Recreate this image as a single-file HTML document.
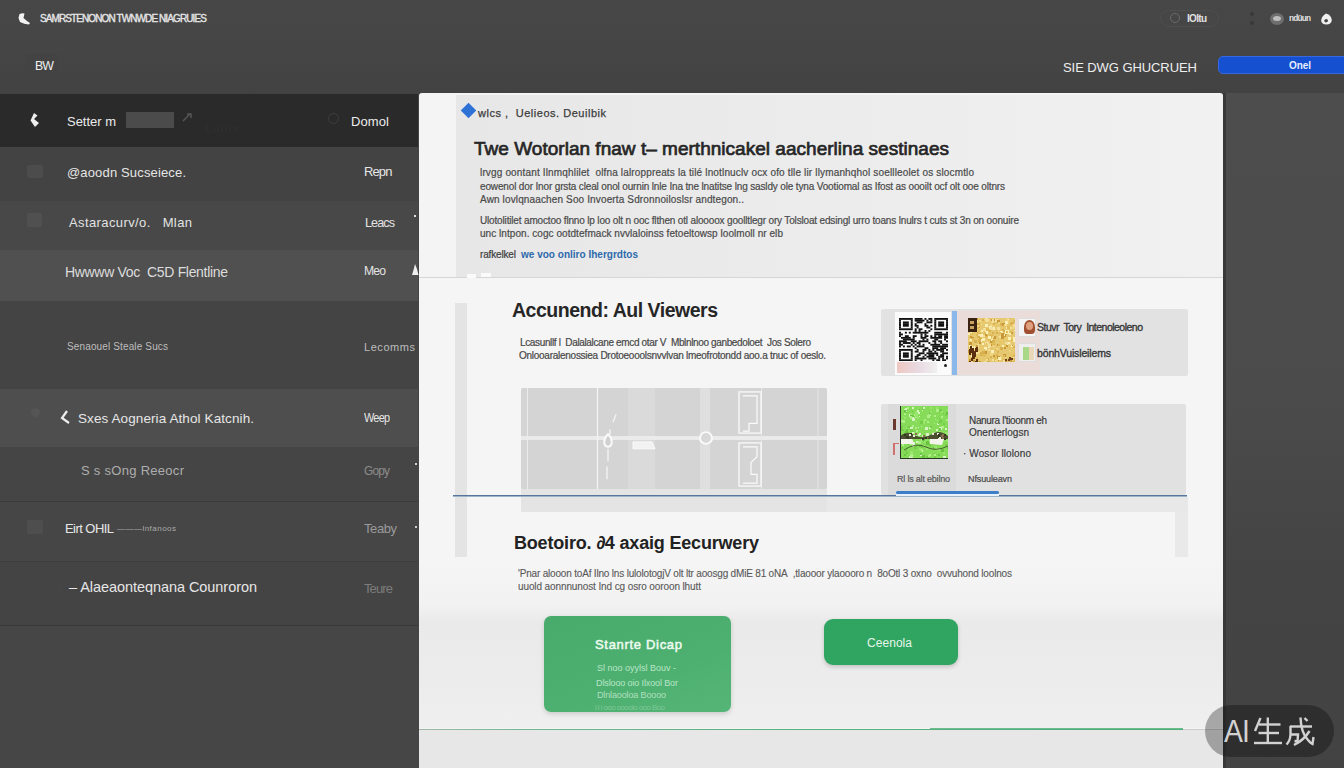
<!DOCTYPE html>
<html><head><meta charset="utf-8">
<style>
*{margin:0;padding:0;box-sizing:border-box}
html,body{width:1344px;height:768px;overflow:hidden}
body{background:#454545;font-family:"Liberation Sans",sans-serif;position:relative}
.a{position:absolute;white-space:nowrap}
</style></head><body>

<div class="a" style="left:0;top:0;width:1344px;height:94px;background:linear-gradient(180deg,#474747,#454545 60%,#424242)"></div>
<svg class="a" style="left:17px;top:12px" width="14" height="14" viewBox="0 0 14 14"><path d="M2.5 2 Q5 1 7.5 1.5 L6.5 6 Q9 8.5 13 11 L12 12.5 Q7 12 3 10 L1.5 6 Z" fill="#f2f2f2"/></svg>
<div class="a" style="left:25px;top:54px;width:33px;height:22px;background:#434343;border-radius:3px"></div>
<div class="a" style="left:1160px;top:10px;width:59px;height:17px;border:1px solid #4e4e4e;border-radius:9px"></div>
<div class="a" style="left:1170px;top:13px;width:10px;height:10px;border:1.5px solid #6a6a6a;border-radius:50%"></div>
<div class="a" style="left:1250px;top:12px;width:4px;height:4px;background:#383838;border-radius:2px"></div>
<div class="a" style="left:1250px;top:21px;width:4px;height:4px;background:#383838;border-radius:2px"></div>
<div class="a" style="left:1270px;top:13px;width:14px;height:12px;background:#6e6e6e;border-radius:50%"></div>
<div class="a" style="left:1273px;top:16px;width:8px;height:5px;background:#bdbdbd;border-radius:50%"></div>
<svg class="a" style="left:1320px;top:12px" width="13" height="14" viewBox="0 0 13 14"><path d="M6 1.5 Q11.5 3 11.8 8.5 Q11 12.5 6.5 12.5 Q1.5 12.5 1.2 8.5 Q1.5 4 6 1.5 Z" fill="#f0f0f0"/><path d="M4 9 Q5.5 5.5 8 8 Q8 10.5 5.5 10.5 Z" fill="#454545"/></svg>
<div class="a" style="left:1218px;top:56px;width:130px;height:18px;background:#1450cf;border-radius:5px;border:1px solid #3768e0"></div>
<div class="a" style="left:0;top:94px;width:418px;height:53px;background:#2a2a2a"></div>
<div class="a" style="left:0;top:147px;width:418px;height:54px;background:#434343"></div>
<div class="a" style="left:0;top:201px;width:418px;height:49px;background:#484848"></div>
<div class="a" style="left:0;top:250px;width:418px;height:51px;background:#505050"></div>
<div class="a" style="left:0;top:301px;width:418px;height:88px;background:#444444"></div>
<div class="a" style="left:0;top:389px;width:418px;height:58px;background:#4e4e4e"></div>
<div class="a" style="left:0;top:447px;width:418px;height:54px;background:#454545"></div>
<div class="a" style="left:0;top:501px;width:418px;height:60px;background:#464646;border-top:1px solid #3b3b3b"></div>
<div class="a" style="left:0;top:561px;width:418px;height:64px;background:#444444;border-top:1px solid #3d3d3d"></div>
<div class="a" style="left:0;top:625px;width:418px;height:143px;background:#464646;border-top:1px solid #393939"></div>
<svg class="a" style="left:29px;top:112px" width="11" height="16" viewBox="0 0 11 16"><path d="M5 1 L8.5 3.5 L5 7 L10 11 L6 15 L1.5 8.5 Z" fill="#eeeeee"/></svg>
<div class="a" style="left:126px;top:112px;width:48px;height:16px;background:#4b4b4b;border-radius:1px"></div>
<svg class="a" style="left:181px;top:112px" width="12" height="11" viewBox="0 0 12 11"><path d="M2 9 L9 2 M6 2 L10 2 L10 6" stroke="#555" stroke-width="1.5" fill="none"/></svg>
<div class="a" style="left:328px;top:113px;width:11px;height:11px;border:1.5px solid #3e3e3e;border-radius:50%"></div>
<div class="a" style="left:27px;top:165px;width:16px;height:13px;background:#4c4c4c;border-radius:2px"></div>
<div class="a" style="left:27px;top:213px;width:15px;height:14px;background:#505050;border-radius:2px"></div>
<div class="a" style="left:414px;top:215px;width:2px;height:2px;background:#ddd"></div>
<svg class="a" style="left:411px;top:263px" width="8" height="14" viewBox="0 0 8 14"><path d="M4 1 L6 6 L7.5 12 L1 12 L2.5 7 Z" fill="#eee"/></svg>
<div class="a" style="left:31px;top:408px;width:9px;height:9px;background:#555;border-radius:50%"></div>
<svg class="a" style="left:60px;top:410px" width="12" height="15" viewBox="0 0 12 15"><path d="M7 1 L2 8 L9 13" stroke="#eee" stroke-width="2.2" fill="none"/></svg>
<div class="a" style="left:415px;top:463px;width:2px;height:2px;background:#ccc"></div>
<div class="a" style="left:27px;top:520px;width:16px;height:14px;background:#4e4e4e;border-radius:2px"></div>
<div class="a" style="left:415px;top:526px;width:2px;height:2px;background:#ccc"></div>
<div class="a" style="left:1223px;top:93px;width:121px;height:675px;background:linear-gradient(180deg,#4d4d4d,#4b4b4b 45%,#444444 70%,#434343)"></div>
<div class="a" style="left:1223px;top:93px;width:3px;height:675px;background:#383838"></div>
<div class="a" style="left:419px;top:93px;width:804px;height:675px;background:#f4f4f4;border-radius:3px 3px 0 0"></div>
<div class="a" style="left:456px;top:95px;width:767px;height:183px;background:linear-gradient(90deg,#e7e7e7,#ececec 50%,#f1f1f1)"></div>
<div class="a" style="left:419px;top:277px;width:804px;height:1px;background:#d6d6d6"></div>
<div class="a" style="left:419px;top:278px;width:804px;height:340px;background:#f5f5f5"></div>
<div class="a" style="left:419px;top:560px;width:804px;height:168px;background:linear-gradient(180deg,#f5f5f5 0px,#f2f2f2 45px,#eaeaea 62px,#ececec 120px,#efefef 168px)"></div>
<div class="a" style="left:419px;top:729px;width:764px;height:1px;background:linear-gradient(90deg,#a0b8a8,#70b890 15%,#58b080 50%,#4fae7a)"></div>
<div class="a" style="left:930px;top:728px;width:253px;height:1px;background:#6cbc8c"></div>
<div class="a" style="left:1183px;top:729px;width:40px;height:1px;background:#cccccc"></div>
<div class="a" style="left:419px;top:730px;width:804px;height:38px;background:#e7e7e7"></div>
<div class="a" style="left:467px;top:274px;width:9px;height:4px;background:#fafafa"></div>
<div class="a" style="left:481px;top:273px;width:10px;height:4px;background:#fafafa"></div>
<div class="a" style="left:463px;top:104.5px;width:11px;height:11px;background:#2f72d6;transform:rotate(45deg)"></div>
<div class="a" style="left:455px;top:303px;width:12px;height:254px;background:#e4e4e4"></div>
<div class="a" style="left:521px;top:497px;width:667px;height:15px;background:#e8e8e8"></div>
<div class="a" style="left:1175px;top:512px;width:13px;height:45px;background:#e9e9e9"></div>
<div class="a" style="left:521px;top:388px;width:306px;height:124px;background:#e4e4e4;border-radius:3px"></div>
<svg class="a" style="left:521px;top:388px" width="306" height="101" viewBox="0 0 306 103" preserveAspectRatio="none">
<rect x="0" y="0" width="306" height="103" rx="2" fill="#d4d4d4"/>
<rect x="107" y="0" width="27" height="103" fill="#dadada"/>
<rect x="179" y="0" width="10" height="103" fill="#dfdfdf"/>
<rect x="0" y="49" width="306" height="4" fill="#ebebeb"/>
<line x1="6.5" y1="0" x2="6.5" y2="103" stroke="#ebebeb" stroke-width="1"/>
<line x1="76.5" y1="0" x2="76.5" y2="103" stroke="#f4f4f4" stroke-width="1.2"/>
<line x1="297" y1="0" x2="297" y2="103" stroke="#e6e6e6" stroke-width="1"/>
<line x1="240.5" y1="0" x2="240.5" y2="103" stroke="#e6e6e6" stroke-width="1"/>
<path d="M95 27 L92 35 M89 42 L89 48 M87 62 L87 75 M86 80 L86 93" stroke="#f4f4f4" stroke-width="1.3" fill="none"/>
<path d="M87 47 C82 52 82 59 87 60 C92 59 92 52 87 47 Z" stroke="#fafafa" stroke-width="2" fill="#d0d0d0"/>
<path d="M112 55 L131 55 L134 62 L112 62 Z" fill="#f2f2f2" stroke="#fafafa" stroke-width="1"/>
<circle cx="185" cy="51" r="6" fill="#d8d8d8" stroke="#fafafa" stroke-width="2"/>
<rect x="218" y="4" width="22" height="42" fill="none" stroke="#fafafa" stroke-width="1.3"/>
<path d="M222 8 L236 8 L236 36 L228 36 L228 44 L222 44" fill="none" stroke="#fafafa" stroke-width="1.2"/>
<rect x="218" y="56" width="22" height="44" fill="none" stroke="#fafafa" stroke-width="1.3"/>
<path d="M222 60 L236 60 L236 70 L230 76 L230 88 L236 88 L236 97 L222 97" fill="none" stroke="#fafafa" stroke-width="1.2"/>
</svg>
<div class="a" style="left:453px;top:495px;width:734px;height:1px;background:#56769c"></div>
<div class="a" style="left:453px;top:496px;width:734px;height:1px;background:#9fb2c8"></div>
<div class="a" style="left:881px;top:309px;width:307px;height:67px;background:#e2e2e2;border-radius:2px"></div>
<div class="a" style="left:895px;top:312px;width:56px;height:63px;background:#fbfbfb"></div>
<div class="a" style="left:952px;top:311px;width:5px;height:64px;background:#8ab8ea"></div>
<div class="a" style="left:957px;top:311px;width:83px;height:64px;background:#eadcd8"></div>
<svg class="a" style="left:899px;top:318px" width="49" height="43" viewBox="0 0 25 25" preserveAspectRatio="none"><g fill="#121212"><rect x="0" y="0" width="7" height="1.08"/><rect x="8" y="0" width="4" height="1.08"/><rect x="13" y="0" width="1" height="1.08"/><rect x="15" y="0" width="2" height="1.08"/><rect x="18" y="0" width="7" height="1.08"/><rect x="0" y="1" width="1" height="1.08"/><rect x="6" y="1" width="1" height="1.08"/><rect x="8" y="1" width="5" height="1.08"/><rect x="14" y="1" width="1" height="1.08"/><rect x="16" y="1" width="1" height="1.08"/><rect x="18" y="1" width="1" height="1.08"/><rect x="24" y="1" width="1" height="1.08"/><rect x="0" y="2" width="1" height="1.08"/><rect x="2" y="2" width="3" height="1.08"/><rect x="6" y="2" width="1" height="1.08"/><rect x="9" y="2" width="3" height="1.08"/><rect x="14" y="2" width="3" height="1.08"/><rect x="18" y="2" width="1" height="1.08"/><rect x="20" y="2" width="3" height="1.08"/><rect x="24" y="2" width="1" height="1.08"/><rect x="0" y="3" width="1" height="1.08"/><rect x="2" y="3" width="3" height="1.08"/><rect x="6" y="3" width="1" height="1.08"/><rect x="8" y="3" width="1" height="1.08"/><rect x="13" y="3" width="1" height="1.08"/><rect x="18" y="3" width="1" height="1.08"/><rect x="20" y="3" width="3" height="1.08"/><rect x="24" y="3" width="1" height="1.08"/><rect x="0" y="4" width="1" height="1.08"/><rect x="2" y="4" width="3" height="1.08"/><rect x="6" y="4" width="1" height="1.08"/><rect x="8" y="4" width="2" height="1.08"/><rect x="13" y="4" width="2" height="1.08"/><rect x="16" y="4" width="1" height="1.08"/><rect x="18" y="4" width="1" height="1.08"/><rect x="20" y="4" width="3" height="1.08"/><rect x="24" y="4" width="1" height="1.08"/><rect x="0" y="5" width="1" height="1.08"/><rect x="6" y="5" width="1" height="1.08"/><rect x="9" y="5" width="1" height="1.08"/><rect x="14" y="5" width="2" height="1.08"/><rect x="18" y="5" width="1" height="1.08"/><rect x="24" y="5" width="1" height="1.08"/><rect x="0" y="6" width="7" height="1.08"/><rect x="8" y="6" width="1" height="1.08"/><rect x="10" y="6" width="2" height="1.08"/><rect x="16" y="6" width="1" height="1.08"/><rect x="18" y="6" width="7" height="1.08"/><rect x="8" y="7" width="1" height="1.08"/><rect x="10" y="7" width="1" height="1.08"/><rect x="13" y="7" width="1" height="1.08"/><rect x="15" y="7" width="1" height="1.08"/><rect x="0" y="8" width="1" height="1.08"/><rect x="3" y="8" width="1" height="1.08"/><rect x="5" y="8" width="1" height="1.08"/><rect x="7" y="8" width="8" height="1.08"/><rect x="18" y="8" width="4" height="1.08"/><rect x="24" y="8" width="1" height="1.08"/><rect x="0" y="9" width="2" height="1.08"/><rect x="11" y="9" width="1" height="1.08"/><rect x="13" y="9" width="1" height="1.08"/><rect x="18" y="9" width="7" height="1.08"/><rect x="0" y="10" width="1" height="1.08"/><rect x="3" y="10" width="2" height="1.08"/><rect x="7" y="10" width="2" height="1.08"/><rect x="11" y="10" width="1" height="1.08"/><rect x="13" y="10" width="2" height="1.08"/><rect x="16" y="10" width="1" height="1.08"/><rect x="18" y="10" width="1" height="1.08"/><rect x="20" y="10" width="2" height="1.08"/><rect x="23" y="10" width="2" height="1.08"/><rect x="1" y="11" width="5" height="1.08"/><rect x="7" y="11" width="1" height="1.08"/><rect x="11" y="11" width="3" height="1.08"/><rect x="16" y="11" width="6" height="1.08"/><rect x="23" y="11" width="2" height="1.08"/><rect x="2" y="12" width="6" height="1.08"/><rect x="12" y="12" width="1" height="1.08"/><rect x="14" y="12" width="1" height="1.08"/><rect x="18" y="12" width="2" height="1.08"/><rect x="23" y="12" width="1" height="1.08"/><rect x="0" y="13" width="4" height="1.08"/><rect x="6" y="13" width="3" height="1.08"/><rect x="10" y="13" width="5" height="1.08"/><rect x="17" y="13" width="2" height="1.08"/><rect x="20" y="13" width="2" height="1.08"/><rect x="24" y="13" width="1" height="1.08"/><rect x="0" y="14" width="1" height="1.08"/><rect x="2" y="14" width="4" height="1.08"/><rect x="7" y="14" width="1" height="1.08"/><rect x="9" y="14" width="2" height="1.08"/><rect x="15" y="14" width="1" height="1.08"/><rect x="18" y="14" width="1" height="1.08"/><rect x="21" y="14" width="1" height="1.08"/><rect x="0" y="15" width="2" height="1.08"/><rect x="6" y="15" width="1" height="1.08"/><rect x="8" y="15" width="1" height="1.08"/><rect x="10" y="15" width="1" height="1.08"/><rect x="12" y="15" width="1" height="1.08"/><rect x="16" y="15" width="5" height="1.08"/><rect x="22" y="15" width="3" height="1.08"/><rect x="0" y="16" width="1" height="1.08"/><rect x="2" y="16" width="1" height="1.08"/><rect x="4" y="16" width="2" height="1.08"/><rect x="7" y="16" width="1" height="1.08"/><rect x="9" y="16" width="4" height="1.08"/><rect x="17" y="16" width="8" height="1.08"/><rect x="8" y="17" width="1" height="1.08"/><rect x="13" y="17" width="2" height="1.08"/><rect x="17" y="17" width="3" height="1.08"/><rect x="21" y="17" width="3" height="1.08"/><rect x="0" y="18" width="7" height="1.08"/><rect x="9" y="18" width="1" height="1.08"/><rect x="12" y="18" width="2" height="1.08"/><rect x="15" y="18" width="1" height="1.08"/><rect x="17" y="18" width="1" height="1.08"/><rect x="19" y="18" width="4" height="1.08"/><rect x="24" y="18" width="1" height="1.08"/><rect x="0" y="19" width="1" height="1.08"/><rect x="6" y="19" width="1" height="1.08"/><rect x="8" y="19" width="2" height="1.08"/><rect x="12" y="19" width="1" height="1.08"/><rect x="15" y="19" width="2" height="1.08"/><rect x="18" y="19" width="1" height="1.08"/><rect x="21" y="19" width="2" height="1.08"/><rect x="0" y="20" width="1" height="1.08"/><rect x="2" y="20" width="3" height="1.08"/><rect x="6" y="20" width="1" height="1.08"/><rect x="10" y="20" width="3" height="1.08"/><rect x="14" y="20" width="6" height="1.08"/><rect x="22" y="20" width="3" height="1.08"/><rect x="0" y="21" width="1" height="1.08"/><rect x="2" y="21" width="3" height="1.08"/><rect x="6" y="21" width="1" height="1.08"/><rect x="9" y="21" width="2" height="1.08"/><rect x="13" y="21" width="1" height="1.08"/><rect x="15" y="21" width="3" height="1.08"/><rect x="19" y="21" width="1" height="1.08"/><rect x="21" y="21" width="2" height="1.08"/><rect x="0" y="22" width="1" height="1.08"/><rect x="2" y="22" width="3" height="1.08"/><rect x="6" y="22" width="1" height="1.08"/><rect x="8" y="22" width="2" height="1.08"/><rect x="12" y="22" width="1" height="1.08"/><rect x="14" y="22" width="4" height="1.08"/><rect x="20" y="22" width="3" height="1.08"/><rect x="24" y="22" width="1" height="1.08"/><rect x="0" y="23" width="1" height="1.08"/><rect x="6" y="23" width="1" height="1.08"/><rect x="8" y="23" width="6" height="1.08"/><rect x="15" y="23" width="4" height="1.08"/><rect x="20" y="23" width="1" height="1.08"/><rect x="22" y="23" width="1" height="1.08"/><rect x="24" y="23" width="1" height="1.08"/><rect x="0" y="24" width="7" height="1.08"/><rect x="8" y="24" width="1" height="1.08"/><rect x="11" y="24" width="1" height="1.08"/><rect x="17" y="24" width="1" height="1.08"/><rect x="19" y="24" width="2" height="1.08"/><rect x="22" y="24" width="2" height="1.08"/></g></svg>
<div class="a" style="left:897px;top:362px;width:40px;height:11px;background:linear-gradient(90deg,#efc8c0,#e8d8e0 50%,#f0f0f0)"></div>
<div class="a" style="left:944px;top:364px;width:3px;height:3px;background:#222;border-radius:2px"></div>
<svg class="a" style="left:968px;top:318px" width="47" height="44" viewBox="0 0 47 44"><rect width="47" height="44" fill="#e6c870"/><rect x="11" y="24" width="2" height="2" fill="#c89838"/><rect x="22" y="26" width="2" height="2" fill="#e0bc58"/><rect x="22" y="24" width="2" height="2" fill="#f0d480"/><rect x="22" y="37" width="2" height="2" fill="#f0d480"/><rect x="40" y="10" width="1" height="1" fill="#c89838"/><rect x="18" y="1" width="3" height="3" fill="#f4e09a"/><rect x="36" y="26" width="2" height="2" fill="#e8c868"/><rect x="39" y="12" width="2" height="2" fill="#fbf0b8"/><rect x="34" y="41" width="2" height="2" fill="#e0bc58"/><rect x="27" y="42" width="1" height="1" fill="#d8b050"/><rect x="5" y="6" width="2" height="2" fill="#f0d480"/><rect x="20" y="28" width="2" height="2" fill="#c89838"/><rect x="39" y="25" width="2" height="2" fill="#fbf0b8"/><rect x="27" y="40" width="2" height="2" fill="#e8c868"/><rect x="40" y="44" width="2" height="2" fill="#f4e09a"/><rect x="33" y="14" width="2" height="2" fill="#c89838"/><rect x="27" y="31" width="2" height="2" fill="#e0bc58"/><rect x="46" y="12" width="1" height="1" fill="#fbf0b8"/><rect x="40" y="44" width="1" height="1" fill="#e0bc58"/><rect x="3" y="39" width="1" height="1" fill="#fbf0b8"/><rect x="36" y="38" width="1" height="1" fill="#c89838"/><rect x="36" y="17" width="2" height="2" fill="#c89838"/><rect x="41" y="43" width="2" height="2" fill="#e8c868"/><rect x="15" y="3" width="2" height="2" fill="#e8c868"/><rect x="45" y="43" width="2" height="2" fill="#d8b050"/><rect x="7" y="2" width="3" height="3" fill="#d8b050"/><rect x="17" y="6" width="3" height="3" fill="#fbf0b8"/><rect x="22" y="23" width="2" height="2" fill="#c89838"/><rect x="32" y="5" width="3" height="3" fill="#e0bc58"/><rect x="24" y="19" width="2" height="2" fill="#f4e09a"/><rect x="44" y="19" width="2" height="2" fill="#d8b050"/><rect x="26" y="1" width="2" height="2" fill="#c89838"/><rect x="15" y="17" width="2" height="2" fill="#f4e09a"/><rect x="3" y="28" width="2" height="2" fill="#f0d480"/><rect x="43" y="27" width="2" height="2" fill="#fbf0b8"/><rect x="1" y="3" width="2" height="2" fill="#d8b050"/><rect x="12" y="20" width="2" height="2" fill="#d8b050"/><rect x="8" y="8" width="3" height="3" fill="#e0bc58"/><rect x="28" y="13" width="2" height="2" fill="#e0bc58"/><rect x="38" y="43" width="2" height="2" fill="#f4e09a"/><rect x="15" y="10" width="3" height="3" fill="#f4e09a"/><rect x="15" y="30" width="2" height="2" fill="#e8c868"/><rect x="5" y="14" width="2" height="2" fill="#e0bc58"/><rect x="11" y="36" width="3" height="3" fill="#e8c868"/><rect x="16" y="29" width="3" height="3" fill="#fbf0b8"/><rect x="13" y="35" width="1" height="1" fill="#f4e09a"/><rect x="15" y="37" width="2" height="2" fill="#e0bc58"/><rect x="13" y="36" width="2" height="2" fill="#e0bc58"/><rect x="29" y="26" width="2" height="2" fill="#c89838"/><rect x="37" y="12" width="2" height="2" fill="#fbf0b8"/><rect x="14" y="25" width="1" height="1" fill="#fbf0b8"/><rect x="7" y="0" width="3" height="3" fill="#c89838"/><rect x="46" y="19" width="3" height="3" fill="#f0d480"/><rect x="10" y="33" width="3" height="3" fill="#f0d480"/><rect x="35" y="42" width="2" height="2" fill="#f4e09a"/><rect x="40" y="38" width="3" height="3" fill="#e8c868"/><rect x="38" y="2" width="3" height="3" fill="#f0d480"/><rect x="24" y="9" width="3" height="3" fill="#fbf0b8"/><rect x="27" y="1" width="3" height="3" fill="#f4e09a"/><rect x="24" y="11" width="1" height="1" fill="#c89838"/><rect x="19" y="41" width="2" height="2" fill="#d8b050"/><rect x="6" y="43" width="2" height="2" fill="#e0bc58"/><rect x="37" y="15" width="2" height="2" fill="#c89838"/><rect x="42" y="5" width="2" height="2" fill="#d8b050"/><rect x="43" y="35" width="3" height="3" fill="#e8c868"/><rect x="23" y="25" width="2" height="2" fill="#e0bc58"/><rect x="13" y="12" width="2" height="2" fill="#fbf0b8"/><rect x="2" y="14" width="3" height="3" fill="#e0bc58"/><rect x="3" y="6" width="1" height="1" fill="#e8c868"/><rect x="23" y="1" width="2" height="2" fill="#c89838"/><rect x="24" y="14" width="2" height="2" fill="#d8b050"/><rect x="18" y="17" width="2" height="2" fill="#d8b050"/><rect x="9" y="14" width="1" height="1" fill="#c89838"/><rect x="0" y="32" width="3" height="3" fill="#c89838"/><rect x="8" y="16" width="2" height="2" fill="#e0bc58"/><rect x="25" y="28" width="1" height="1" fill="#fbf0b8"/><rect x="2" y="28" width="3" height="3" fill="#d8b050"/><rect x="20" y="31" width="2" height="2" fill="#f4e09a"/><rect x="10" y="12" width="2" height="2" fill="#e0bc58"/><rect x="20" y="19" width="3" height="3" fill="#d8b050"/><rect x="18" y="40" width="3" height="3" fill="#d8b050"/><rect x="6" y="30" width="3" height="3" fill="#f0d480"/><rect x="31" y="39" width="3" height="3" fill="#f0d480"/><rect x="5" y="14" width="2" height="2" fill="#e0bc58"/><rect x="28" y="0" width="1" height="1" fill="#e0bc58"/><rect x="18" y="23" width="2" height="2" fill="#f0d480"/><rect x="41" y="8" width="1" height="1" fill="#e0bc58"/><rect x="40" y="1" width="1" height="1" fill="#fbf0b8"/><rect x="39" y="42" width="2" height="2" fill="#e0bc58"/><rect x="4" y="44" width="2" height="2" fill="#c89838"/><rect x="34" y="5" width="3" height="3" fill="#c89838"/><rect x="3" y="14" width="2" height="2" fill="#e0bc58"/><rect x="4" y="44" width="2" height="2" fill="#fbf0b8"/><rect x="29" y="33" width="2" height="2" fill="#d8b050"/><rect x="28" y="41" width="2" height="2" fill="#e8c868"/><rect x="18" y="10" width="3" height="3" fill="#e0bc58"/><rect x="35" y="7" width="2" height="2" fill="#e0bc58"/><rect x="27" y="41" width="2" height="2" fill="#f4e09a"/><rect x="30" y="39" width="1" height="1" fill="#e8c868"/><rect x="23" y="21" width="2" height="2" fill="#fbf0b8"/><rect x="28" y="38" width="1" height="1" fill="#e0bc58"/><rect x="9" y="26" width="2" height="2" fill="#f4e09a"/><rect x="40" y="24" width="3" height="3" fill="#f0d480"/><rect x="33" y="18" width="3" height="3" fill="#c89838"/><rect x="46" y="39" width="2" height="2" fill="#d8b050"/><rect x="23" y="17" width="2" height="2" fill="#d8b050"/><rect x="11" y="21" width="3" height="3" fill="#fbf0b8"/><rect x="47" y="21" width="2" height="2" fill="#fbf0b8"/><rect x="27" y="40" width="2" height="2" fill="#e8c868"/><rect x="23" y="32" width="3" height="3" fill="#fbf0b8"/><rect x="37" y="39" width="1" height="1" fill="#f4e09a"/><rect x="42" y="29" width="3" height="3" fill="#e8c868"/><rect x="45" y="38" width="2" height="2" fill="#f4e09a"/><rect x="36" y="6" width="2" height="2" fill="#f0d480"/><rect x="40" y="40" width="2" height="2" fill="#e0bc58"/><rect x="2" y="8" width="1" height="1" fill="#e0bc58"/><rect x="4" y="4" width="3" height="3" fill="#d8b050"/><rect x="2" y="20" width="3" height="3" fill="#d8b050"/><rect x="0" y="15" width="2" height="2" fill="#fbf0b8"/><rect x="4" y="28" width="3" height="3" fill="#fbf0b8"/><rect x="18" y="24" width="1" height="1" fill="#d8b050"/><rect x="4" y="19" width="2" height="2" fill="#c89838"/><rect x="43" y="4" width="3" height="3" fill="#d8b050"/><rect x="32" y="16" width="2" height="2" fill="#f0d480"/><rect x="32" y="29" width="3" height="3" fill="#d8b050"/><rect x="5" y="42" width="2" height="2" fill="#c89838"/><rect x="25" y="5" width="2" height="2" fill="#d8b050"/><rect x="3" y="13" width="3" height="3" fill="#f0d480"/><rect x="9" y="28" width="2" height="2" fill="#f4e09a"/><rect x="17" y="40" width="2" height="2" fill="#e8c868"/><rect x="44" y="6" width="2" height="2" fill="#f0d480"/><rect x="31" y="18" width="2" height="2" fill="#f4e09a"/><rect x="22" y="14" width="2" height="2" fill="#e8c868"/><rect x="5" y="8" width="2" height="2" fill="#c89838"/><rect x="35" y="16" width="2" height="2" fill="#fbf0b8"/><rect x="3" y="6" width="2" height="2" fill="#d8b050"/><rect x="12" y="34" width="2" height="2" fill="#d8b050"/><rect x="44" y="20" width="3" height="3" fill="#e8c868"/><rect x="17" y="37" width="1" height="1" fill="#d8b050"/><rect x="28" y="30" width="2" height="2" fill="#f0d480"/><rect x="5" y="31" width="2" height="2" fill="#f0d480"/><rect x="35" y="36" width="3" height="3" fill="#c89838"/><rect x="29" y="38" width="3" height="3" fill="#c89838"/><rect x="25" y="25" width="2" height="2" fill="#d8b050"/><rect x="17" y="13" width="3" height="3" fill="#fbf0b8"/><rect x="42" y="42" width="2" height="2" fill="#c89838"/><rect x="43" y="14" width="2" height="2" fill="#c89838"/><rect x="32" y="13" width="3" height="3" fill="#fbf0b8"/><rect x="1" y="8" width="2" height="2" fill="#e8c868"/><rect x="36" y="29" width="2" height="2" fill="#c89838"/><rect x="29" y="9" width="3" height="3" fill="#f4e09a"/><rect x="2" y="22" width="2" height="2" fill="#fbf0b8"/><rect x="5" y="12" width="2" height="2" fill="#f4e09a"/><rect x="6" y="35" width="2" height="2" fill="#e8c868"/><rect x="1" y="27" width="2" height="2" fill="#fbf0b8"/><rect x="25" y="41" width="2" height="2" fill="#e0bc58"/><rect x="16" y="31" width="1" height="1" fill="#e0bc58"/><rect x="28" y="41" width="2" height="2" fill="#f0d480"/><rect x="47" y="44" width="2" height="2" fill="#e8c868"/><rect x="40" y="19" width="3" height="3" fill="#fbf0b8"/><rect x="15" y="35" width="2" height="2" fill="#e0bc58"/><rect x="9" y="7" width="2" height="2" fill="#f0d480"/><rect x="3" y="37" width="2" height="2" fill="#fbf0b8"/><rect x="14" y="20" width="3" height="3" fill="#fbf0b8"/><rect x="21" y="20" width="1" height="1" fill="#d8b050"/><rect x="17" y="16" width="2" height="2" fill="#c89838"/><rect x="19" y="43" width="3" height="3" fill="#d8b050"/><rect x="37" y="6" width="2" height="2" fill="#f4e09a"/><rect x="7" y="1" width="2" height="2" fill="#c89838"/><rect x="8" y="1" width="1" height="1" fill="#f4e09a"/><rect x="21" y="8" width="3" height="3" fill="#fbf0b8"/><rect x="21" y="18" width="2" height="2" fill="#e8c868"/><rect x="11" y="2" width="2" height="2" fill="#f4e09a"/><rect x="11" y="17" width="2" height="2" fill="#d8b050"/><rect x="29" y="15" width="1" height="1" fill="#e8c868"/><rect x="38" y="13" width="3" height="3" fill="#fbf0b8"/><rect x="37" y="42" width="2" height="2" fill="#c89838"/><rect x="12" y="36" width="2" height="2" fill="#d8b050"/><rect x="15" y="2" width="2" height="2" fill="#e8c868"/><rect x="28" y="0" width="1" height="1" fill="#e8c868"/><rect x="1" y="22" width="2" height="2" fill="#f4e09a"/><rect x="31" y="40" width="2" height="2" fill="#e0bc58"/><rect x="22" y="35" width="3" height="3" fill="#f0d480"/><rect x="2" y="13" width="2" height="2" fill="#fbf0b8"/><rect x="4" y="13" width="3" height="3" fill="#e8c868"/><rect x="24" y="24" width="2" height="2" fill="#e0bc58"/><rect x="44" y="8" width="3" height="3" fill="#f0d480"/><rect x="18" y="41" width="2" height="2" fill="#f4e09a"/><rect x="17" y="18" width="2" height="2" fill="#e0bc58"/><rect x="33" y="15" width="3" height="3" fill="#c89838"/><rect x="34" y="27" width="2" height="2" fill="#fbf0b8"/><rect x="45" y="2" width="2" height="2" fill="#e0bc58"/><rect x="1" y="21" width="3" height="3" fill="#f0d480"/><rect x="31" y="14" width="2" height="2" fill="#e0bc58"/><rect x="30" y="39" width="3" height="3" fill="#fbf0b8"/><rect x="22" y="38" width="2" height="2" fill="#d8b050"/><rect x="0" y="9" width="3" height="3" fill="#e8c868"/><rect x="16" y="14" width="2" height="2" fill="#e0bc58"/><rect x="31" y="11" width="1" height="1" fill="#f4e09a"/><rect x="44" y="6" width="3" height="3" fill="#e8c868"/><rect x="11" y="43" width="2" height="2" fill="#c89838"/><rect x="24" y="22" width="3" height="3" fill="#d8b050"/><rect x="37" y="24" width="2" height="2" fill="#f4e09a"/><rect x="29" y="2" width="3" height="3" fill="#c89838"/><rect x="1" y="43" width="2" height="2" fill="#d8b050"/><rect x="4" y="20" width="2" height="2" fill="#e0bc58"/><rect x="32" y="5" width="2" height="2" fill="#f0d480"/><rect x="41" y="15" width="2" height="2" fill="#fbf0b8"/><rect x="37" y="13" width="3" height="3" fill="#fbf0b8"/><rect x="38" y="9" width="2" height="2" fill="#fbf0b8"/><rect x="14" y="28" width="2" height="2" fill="#f4e09a"/><rect x="23" y="3" width="2" height="2" fill="#f0d480"/><rect x="17" y="35" width="1" height="1" fill="#c89838"/><rect x="10" y="15" width="3" height="3" fill="#d8b050"/><rect x="11" y="19" width="2" height="2" fill="#d8b050"/><rect x="8" y="41" width="3" height="3" fill="#e0bc58"/><rect x="41" y="32" width="2" height="2" fill="#f0d480"/><rect x="25" y="18" width="3" height="3" fill="#c89838"/><rect x="45" y="21" width="3" height="3" fill="#fbf0b8"/><rect x="22" y="26" width="1" height="1" fill="#e8c868"/><rect x="9" y="4" width="3" height="3" fill="#d8b050"/><rect x="24" y="3" width="2" height="2" fill="#f4e09a"/><rect x="35" y="12" width="2" height="2" fill="#d8b050"/><rect x="22" y="9" width="3" height="3" fill="#f4e09a"/><rect x="5" y="13" width="2" height="2" fill="#e8c868"/><rect x="10" y="21" width="3" height="3" fill="#d8b050"/><rect x="46" y="43" width="3" height="3" fill="#d8b050"/><rect x="44" y="19" width="3" height="3" fill="#fbf0b8"/><rect x="25" y="24" width="2" height="2" fill="#e0bc58"/><rect x="14" y="1" width="2" height="2" fill="#d8b050"/><rect x="38" y="13" width="2" height="2" fill="#e0bc58"/><rect x="24" y="1" width="2" height="2" fill="#f4e09a"/><rect x="25" y="7" width="1" height="1" fill="#f4e09a"/><rect x="46" y="35" width="2" height="2" fill="#e0bc58"/><rect x="17" y="24" width="2" height="2" fill="#f4e09a"/><rect x="1" y="19" width="2" height="2" fill="#e8c868"/><rect x="28" y="36" width="2" height="2" fill="#d8b050"/><rect x="12" y="35" width="2" height="2" fill="#d8b050"/><rect x="16" y="1" width="1" height="1" fill="#f0d480"/><rect x="8" y="34" width="2" height="2" fill="#f4e09a"/><rect x="35" y="37" width="2" height="2" fill="#e0bc58"/><rect x="39" y="24" width="2" height="2" fill="#f4e09a"/><rect x="2" y="21" width="1" height="1" fill="#e0bc58"/><rect x="43" y="21" width="2" height="2" fill="#e0bc58"/><rect x="38" y="27" width="2" height="2" fill="#c89838"/><rect x="30" y="13" width="1" height="1" fill="#f4e09a"/><rect x="47" y="24" width="2" height="2" fill="#d8b050"/><rect x="21" y="12" width="2" height="2" fill="#d8b050"/><rect x="45" y="7" width="2" height="2" fill="#c89838"/><rect x="2" y="21" width="2" height="2" fill="#fbf0b8"/><rect x="44" y="27" width="1" height="1" fill="#c89838"/><rect x="28" y="5" width="1" height="1" fill="#e0bc58"/><rect x="33" y="40" width="1" height="1" fill="#f0d480"/><rect x="4" y="1" width="2" height="2" fill="#e0bc58"/><rect x="45" y="28" width="2" height="2" fill="#d8b050"/><rect x="9" y="17" width="3" height="3" fill="#d8b050"/><rect x="2" y="9" width="1" height="1" fill="#d8b050"/><rect x="15" y="17" width="2" height="2" fill="#f4e09a"/><rect x="20" y="18" width="3" height="3" fill="#fbf0b8"/><rect x="11" y="9" width="1" height="1" fill="#c89838"/><rect x="5" y="28" width="1" height="1" fill="#e0bc58"/><rect x="38" y="0" width="2" height="2" fill="#f0d480"/><rect x="3" y="12" width="2" height="2" fill="#d8b050"/><rect x="14" y="25" width="2" height="2" fill="#fbf0b8"/><rect x="45" y="6" width="3" height="3" fill="#f4e09a"/><rect x="32" y="21" width="2" height="2" fill="#e8c868"/><rect x="7" y="2" width="3" height="3" fill="#f4e09a"/><rect x="15" y="29" width="1" height="1" fill="#f4e09a"/><rect x="2" y="42" width="2" height="2" fill="#fbf0b8"/><rect x="37" y="19" width="2" height="2" fill="#e8c868"/><rect x="13" y="6" width="1" height="1" fill="#f4e09a"/><rect x="18" y="41" width="2" height="2" fill="#f4e09a"/><rect x="0" y="16" width="1" height="1" fill="#fbf0b8"/><rect x="12" y="16" width="3" height="3" fill="#fbf0b8"/><rect x="5" y="37" width="2" height="2" fill="#f0d480"/><rect x="16" y="33" width="3" height="3" fill="#c89838"/><rect x="19" y="24" width="2" height="2" fill="#f4e09a"/><rect x="25" y="37" width="2" height="2" fill="#c89838"/><rect x="14" y="33" width="3" height="3" fill="#d8b050"/><rect x="45" y="37" width="2" height="2" fill="#d8b050"/><rect x="39" y="6" width="2" height="2" fill="#e8c868"/><rect x="19" y="38" width="1" height="1" fill="#e8c868"/><rect x="7" y="5" width="2" height="2" fill="#c89838"/><rect x="32" y="23" width="3" height="3" fill="#e8c868"/><rect x="22" y="26" width="2" height="2" fill="#c89838"/><rect x="28" y="14" width="2" height="2" fill="#d8b050"/><rect x="30" y="26" width="2" height="2" fill="#e0bc58"/><rect x="46" y="41" width="3" height="3" fill="#e0bc58"/><rect x="16" y="43" width="2" height="2" fill="#f4e09a"/><rect x="6" y="22" width="3" height="3" fill="#d8b050"/><rect x="34" y="11" width="2" height="2" fill="#d8b050"/><rect x="21" y="21" width="2" height="2" fill="#e0bc58"/><rect x="8" y="27" width="2" height="2" fill="#c89838"/><rect x="2" y="18" width="2" height="2" fill="#c89838"/><rect x="37" y="3" width="3" height="3" fill="#fbf0b8"/><rect x="10" y="3" width="2" height="2" fill="#e8c868"/><rect x="26" y="39" width="2" height="2" fill="#e0bc58"/><rect x="18" y="25" width="1" height="1" fill="#d8b050"/><rect x="24" y="18" width="2" height="2" fill="#f0d480"/><rect x="32" y="5" width="2" height="2" fill="#d8b050"/><rect x="10" y="16" width="2" height="2" fill="#f4e09a"/><rect x="42" y="9" width="2" height="2" fill="#f4e09a"/><rect x="1" y="24" width="3" height="3" fill="#c89838"/><rect x="21" y="16" width="2" height="2" fill="#e0bc58"/><rect x="43" y="19" width="2" height="2" fill="#e8c868"/><rect x="24" y="41" width="2" height="2" fill="#f4e09a"/><rect x="42" y="13" width="2" height="2" fill="#e0bc58"/><rect x="8" y="39" width="2" height="2" fill="#e0bc58"/><rect x="17" y="0" width="3" height="3" fill="#f4e09a"/><rect x="22" y="6" width="2" height="2" fill="#f0d480"/><rect x="20" y="28" width="2" height="2" fill="#fbf0b8"/><rect x="13" y="28" width="3" height="3" fill="#e8c868"/><rect x="3" y="39" width="3" height="3" fill="#d8b050"/><rect x="3" y="0" width="2" height="2" fill="#fbf0b8"/><rect x="30" y="4" width="2" height="2" fill="#f0d480"/><rect x="20" y="26" width="3" height="3" fill="#f4e09a"/><rect x="30" y="42" width="1" height="1" fill="#c89838"/><rect x="1" y="41" width="2" height="2" fill="#c89838"/><rect x="39" y="8" width="3" height="3" fill="#e0bc58"/><rect x="40" y="24" width="2" height="2" fill="#fbf0b8"/><rect x="0" y="0" width="9" height="14" fill="#3a2210"/><rect x="2" y="3" width="4" height="3" fill="#c8a060"/><rect x="2" y="8" width="4" height="3" fill="#c8a060"/><rect x="6" y="36" width="2" height="3" fill="#5a3010"/><rect x="2" y="32" width="2" height="3" fill="#5a3010"/><rect x="8" y="29" width="2" height="3" fill="#5a3010"/><rect x="5" y="38" width="2" height="3" fill="#5a3010"/><rect x="3" y="40" width="2" height="3" fill="#5a3010"/><rect x="8" y="42" width="2" height="3" fill="#5a3010"/><rect x="7" y="30" width="2" height="3" fill="#5a3010"/><rect x="1" y="34" width="2" height="3" fill="#5a3010"/><rect x="3" y="30" width="2" height="3" fill="#5a3010"/><rect x="8" y="31" width="2" height="3" fill="#5a3010"/><rect x="7" y="43" width="2" height="3" fill="#5a3010"/><rect x="1" y="43" width="2" height="3" fill="#5a3010"/><rect x="4" y="31" width="2" height="3" fill="#5a3010"/><rect x="2" y="28" width="2" height="3" fill="#5a3010"/><rect x="4" y="34" width="2" height="3" fill="#5a3010"/><rect x="8" y="41" width="2" height="3" fill="#5a3010"/><rect x="1" y="34" width="2" height="3" fill="#5a3010"/><rect x="4" y="30" width="2" height="3" fill="#5a3010"/><rect x="2" y="31" width="2" height="3" fill="#5a3010"/><rect x="6" y="33" width="2" height="3" fill="#5a3010"/><rect x="1" y="31" width="2" height="3" fill="#5a3010"/><rect x="4" y="37" width="2" height="3" fill="#5a3010"/><rect x="37" y="41" width="2" height="2" fill="#6a4020"/><rect x="37" y="41" width="2" height="2" fill="#6a4020"/><rect x="41" y="39" width="2" height="2" fill="#6a4020"/><rect x="43" y="40" width="2" height="2" fill="#6a4020"/><rect x="40" y="41" width="2" height="2" fill="#6a4020"/><rect x="42" y="40" width="2" height="2" fill="#6a4020"/></svg>
<div class="a" style="left:1018px;top:318px;width:18px;height:19px;background:#f4f4f4;border:1px solid #ddd"></div>
<div class="a" style="left:1024px;top:320px;width:11px;height:14px;background:#a05030;border-radius:50% 50% 30% 30%"></div>
<div class="a" style="left:1026px;top:322px;width:7px;height:8px;background:#e0a080;border-radius:50%"></div>
<div class="a" style="left:1018px;top:343px;width:18px;height:19px;background:#eeeeee;border:1px solid #ddd"></div>
<div class="a" style="left:1023px;top:347px;width:6px;height:13px;background:#a8d888"></div>
<div class="a" style="left:1029px;top:347px;width:5px;height:13px;background:#e8d8b8"></div>
<div class="a" style="left:881px;top:404px;width:305px;height:91px;background:#e1e1e1;border-radius:2px"></div>
<div class="a" style="left:888px;top:404px;width:68px;height:91px;background:#dbdbdb"></div>
<svg class="a" style="left:900px;top:406px" width="48" height="53" viewBox="0 0 48 53"><rect width="48" height="53" fill="#86dc58"/><rect x="22" y="30" width="3" height="3" fill="#6ac444"/><rect x="22" y="45" width="1" height="1" fill="#d8f4c4"/><rect x="23" y="33" width="1" height="1" fill="#6ac444"/><rect x="15" y="5" width="3" height="3" fill="#9ae66c"/><rect x="29" y="21" width="2" height="2" fill="#d8f4c4"/><rect x="31" y="33" width="3" height="3" fill="#9ae66c"/><rect x="3" y="10" width="1" height="1" fill="#9ae66c"/><rect x="37" y="17" width="2" height="2" fill="#74cc48"/><rect x="25" y="34" width="2" height="2" fill="#9ae66c"/><rect x="22" y="15" width="3" height="3" fill="#9ae66c"/><rect x="34" y="17" width="1" height="1" fill="#b0ee88"/><rect x="1" y="30" width="1" height="1" fill="#9ae66c"/><rect x="41" y="20" width="3" height="3" fill="#9ae66c"/><rect x="10" y="49" width="1" height="1" fill="#6ac444"/><rect x="47" y="21" width="1" height="1" fill="#74cc48"/><rect x="37" y="14" width="1" height="1" fill="#b0ee88"/><rect x="1" y="22" width="3" height="3" fill="#74cc48"/><rect x="12" y="5" width="1" height="1" fill="#6ac444"/><rect x="9" y="30" width="2" height="2" fill="#74cc48"/><rect x="47" y="41" width="2" height="2" fill="#6ac444"/><rect x="6" y="22" width="1" height="1" fill="#b0ee88"/><rect x="41" y="52" width="2" height="2" fill="#9ae66c"/><rect x="10" y="21" width="3" height="3" fill="#d8f4c4"/><rect x="5" y="52" width="1" height="1" fill="#b0ee88"/><rect x="0" y="32" width="3" height="3" fill="#6ac444"/><rect x="4" y="5" width="2" height="2" fill="#74cc48"/><rect x="1" y="20" width="2" height="2" fill="#74cc48"/><rect x="46" y="26" width="2" height="2" fill="#6ac444"/><rect x="9" y="8" width="3" height="3" fill="#d8f4c4"/><rect x="12" y="10" width="2" height="2" fill="#d8f4c4"/><rect x="9" y="50" width="3" height="3" fill="#d8f4c4"/><rect x="4" y="3" width="1" height="1" fill="#d8f4c4"/><rect x="46" y="13" width="2" height="2" fill="#b0ee88"/><rect x="20" y="48" width="2" height="2" fill="#d8f4c4"/><rect x="8" y="38" width="1" height="1" fill="#74cc48"/><rect x="23" y="35" width="2" height="2" fill="#9ae66c"/><rect x="13" y="49" width="1" height="1" fill="#9ae66c"/><rect x="3" y="22" width="1" height="1" fill="#9ae66c"/><rect x="8" y="20" width="2" height="2" fill="#74cc48"/><rect x="4" y="7" width="2" height="2" fill="#b0ee88"/><rect x="32" y="37" width="2" height="2" fill="#74cc48"/><rect x="28" y="49" width="2" height="2" fill="#b0ee88"/><rect x="34" y="51" width="1" height="1" fill="#9ae66c"/><rect x="23" y="39" width="2" height="2" fill="#9ae66c"/><rect x="4" y="29" width="2" height="2" fill="#74cc48"/><rect x="38" y="48" width="2" height="2" fill="#6ac444"/><rect x="43" y="46" width="2" height="2" fill="#9ae66c"/><rect x="41" y="30" width="2" height="2" fill="#6ac444"/><rect x="18" y="1" width="1" height="1" fill="#9ae66c"/><rect x="31" y="53" width="3" height="3" fill="#b0ee88"/><rect x="19" y="39" width="2" height="2" fill="#6ac444"/><rect x="22" y="29" width="2" height="2" fill="#d8f4c4"/><rect x="1" y="32" width="2" height="2" fill="#74cc48"/><rect x="46" y="6" width="3" height="3" fill="#6ac444"/><rect x="12" y="1" width="2" height="2" fill="#d8f4c4"/><rect x="10" y="9" width="3" height="3" fill="#6ac444"/><rect x="24" y="13" width="2" height="2" fill="#b0ee88"/><rect x="10" y="23" width="3" height="3" fill="#74cc48"/><rect x="42" y="20" width="2" height="2" fill="#b0ee88"/><rect x="10" y="7" width="2" height="2" fill="#9ae66c"/><rect x="34" y="50" width="2" height="2" fill="#74cc48"/><rect x="5" y="25" width="3" height="3" fill="#6ac444"/><rect x="18" y="28" width="2" height="2" fill="#d8f4c4"/><rect x="22" y="4" width="1" height="1" fill="#d8f4c4"/><rect x="2" y="38" width="2" height="2" fill="#b0ee88"/><rect x="31" y="30" width="2" height="2" fill="#6ac444"/><rect x="22" y="1" width="3" height="3" fill="#74cc48"/><rect x="37" y="42" width="3" height="3" fill="#9ae66c"/><rect x="21" y="33" width="2" height="2" fill="#b0ee88"/><rect x="46" y="36" width="1" height="1" fill="#6ac444"/><rect x="12" y="38" width="3" height="3" fill="#d8f4c4"/><rect x="34" y="9" width="2" height="2" fill="#b0ee88"/><rect x="26" y="50" width="2" height="2" fill="#74cc48"/><rect x="19" y="42" width="3" height="3" fill="#9ae66c"/><rect x="20" y="47" width="2" height="2" fill="#6ac444"/><rect x="22" y="33" width="3" height="3" fill="#6ac444"/><rect x="26" y="35" width="2" height="2" fill="#b0ee88"/><rect x="22" y="35" width="1" height="1" fill="#9ae66c"/><rect x="10" y="48" width="3" height="3" fill="#b0ee88"/><rect x="26" y="42" width="2" height="2" fill="#9ae66c"/><rect x="17" y="4" width="2" height="2" fill="#d8f4c4"/><rect x="20" y="15" width="3" height="3" fill="#74cc48"/><rect x="39" y="3" width="3" height="3" fill="#74cc48"/><rect x="26" y="36" width="3" height="3" fill="#6ac444"/><rect x="7" y="27" width="2" height="2" fill="#6ac444"/><rect x="45" y="26" width="3" height="3" fill="#9ae66c"/><rect x="36" y="23" width="2" height="2" fill="#d8f4c4"/><rect x="31" y="28" width="3" height="3" fill="#d8f4c4"/><rect x="12" y="36" width="3" height="3" fill="#d8f4c4"/><rect x="10" y="45" width="3" height="3" fill="#d8f4c4"/><rect x="13" y="26" width="2" height="2" fill="#9ae66c"/><rect x="24" y="32" width="1" height="1" fill="#9ae66c"/><rect x="25" y="21" width="3" height="3" fill="#d8f4c4"/><rect x="6" y="5" width="1" height="1" fill="#d8f4c4"/><rect x="22" y="49" width="3" height="3" fill="#6ac444"/><rect x="13" y="25" width="1" height="1" fill="#6ac444"/><rect x="43" y="50" width="3" height="3" fill="#d8f4c4"/><rect x="15" y="10" width="2" height="2" fill="#b0ee88"/><rect x="6" y="41" width="1" height="1" fill="#74cc48"/><rect x="7" y="1" width="2" height="2" fill="#b0ee88"/><rect x="12" y="26" width="2" height="2" fill="#d8f4c4"/><rect x="6" y="27" width="2" height="2" fill="#74cc48"/><rect x="34" y="47" width="1" height="1" fill="#6ac444"/><rect x="40" y="33" width="2" height="2" fill="#d8f4c4"/><rect x="31" y="28" width="3" height="3" fill="#d8f4c4"/><rect x="28" y="7" width="3" height="3" fill="#b0ee88"/><rect x="43" y="17" width="2" height="2" fill="#74cc48"/><rect x="10" y="53" width="3" height="3" fill="#74cc48"/><rect x="43" y="7" width="1" height="1" fill="#6ac444"/><rect x="5" y="44" width="2" height="2" fill="#74cc48"/><rect x="10" y="33" width="3" height="3" fill="#9ae66c"/><rect x="10" y="36" width="3" height="3" fill="#b0ee88"/><rect x="6" y="27" width="3" height="3" fill="#d8f4c4"/><rect x="48" y="44" width="3" height="3" fill="#6ac444"/><rect x="5" y="2" width="2" height="2" fill="#d8f4c4"/><rect x="43" y="26" width="1" height="1" fill="#9ae66c"/><rect x="10" y="45" width="3" height="3" fill="#9ae66c"/><rect x="28" y="7" width="2" height="2" fill="#9ae66c"/><rect x="37" y="17" width="2" height="2" fill="#d8f4c4"/><rect x="17" y="11" width="2" height="2" fill="#9ae66c"/><rect x="41" y="10" width="2" height="2" fill="#b0ee88"/><rect x="19" y="10" width="1" height="1" fill="#d8f4c4"/><rect x="38" y="17" width="1" height="1" fill="#6ac444"/><rect x="27" y="10" width="2" height="2" fill="#b0ee88"/><rect x="39" y="14" width="3" height="3" fill="#74cc48"/><rect x="39" y="21" width="3" height="3" fill="#d8f4c4"/><rect x="33" y="41" width="3" height="3" fill="#6ac444"/><rect x="10" y="10" width="3" height="3" fill="#b0ee88"/><rect x="23" y="1" width="2" height="2" fill="#d8f4c4"/><rect x="2" y="14" width="3" height="3" fill="#b0ee88"/><rect x="16" y="35" width="2" height="2" fill="#d8f4c4"/><rect x="4" y="27" width="2" height="2" fill="#74cc48"/><rect x="34" y="40" width="3" height="3" fill="#9ae66c"/><rect x="6" y="6" width="1" height="1" fill="#6ac444"/><rect x="19" y="3" width="1" height="1" fill="#6ac444"/><rect x="1" y="14" width="2" height="2" fill="#b0ee88"/><rect x="26" y="27" width="3" height="3" fill="#d8f4c4"/><rect x="41" y="5" width="2" height="2" fill="#9ae66c"/><rect x="26" y="35" width="3" height="3" fill="#6ac444"/><rect x="45" y="8" width="2" height="2" fill="#74cc48"/><rect x="41" y="29" width="2" height="2" fill="#6ac444"/><rect x="45" y="22" width="2" height="2" fill="#d8f4c4"/><rect x="15" y="28" width="2" height="2" fill="#b0ee88"/><rect x="27" y="15" width="2" height="2" fill="#b0ee88"/><rect x="1" y="41" width="2" height="2" fill="#74cc48"/><rect x="20" y="36" width="1" height="1" fill="#b0ee88"/><rect x="36" y="3" width="3" height="3" fill="#b0ee88"/><rect x="4" y="48" width="2" height="2" fill="#6ac444"/><rect x="12" y="40" width="1" height="1" fill="#9ae66c"/><rect x="45" y="38" width="2" height="2" fill="#74cc48"/><rect x="29" y="6" width="2" height="2" fill="#6ac444"/><rect x="6" y="46" width="2" height="2" fill="#74cc48"/><rect x="6" y="23" width="2" height="2" fill="#6ac444"/><rect x="29" y="34" width="2" height="2" fill="#b0ee88"/><rect x="37" y="28" width="3" height="3" fill="#b0ee88"/><rect x="35" y="13" width="1" height="1" fill="#b0ee88"/><rect x="38" y="33" width="2" height="2" fill="#b0ee88"/><rect x="29" y="38" width="2" height="2" fill="#74cc48"/><rect x="30" y="40" width="1" height="1" fill="#74cc48"/><rect x="24" y="35" width="1" height="1" fill="#9ae66c"/><rect x="30" y="1" width="2" height="2" fill="#9ae66c"/><rect x="30" y="5" width="2" height="2" fill="#9ae66c"/><rect x="36" y="48" width="1" height="1" fill="#74cc48"/><rect x="30" y="20" width="2" height="2" fill="#74cc48"/><rect x="16" y="26" width="1" height="1" fill="#9ae66c"/><rect x="39" y="24" width="3" height="3" fill="#74cc48"/><rect x="21" y="40" width="2" height="2" fill="#74cc48"/><rect x="18" y="35" width="3" height="3" fill="#b0ee88"/><rect x="14" y="40" width="3" height="3" fill="#74cc48"/><rect x="21" y="20" width="1" height="1" fill="#b0ee88"/><rect x="4" y="4" width="2" height="2" fill="#6ac444"/><rect x="39" y="25" width="3" height="3" fill="#9ae66c"/><rect x="4" y="11" width="2" height="2" fill="#9ae66c"/><rect x="33" y="26" width="3" height="3" fill="#b0ee88"/><rect x="14" y="8" width="2" height="2" fill="#b0ee88"/><rect x="18" y="6" width="2" height="2" fill="#d8f4c4"/><rect x="29" y="48" width="2" height="2" fill="#b0ee88"/><rect x="21" y="43" width="2" height="2" fill="#b0ee88"/><rect x="11" y="51" width="2" height="2" fill="#d8f4c4"/><rect x="12" y="19" width="2" height="2" fill="#b0ee88"/><rect x="32" y="31" width="3" height="3" fill="#d8f4c4"/><rect x="18" y="21" width="1" height="1" fill="#d8f4c4"/><rect x="27" y="9" width="3" height="3" fill="#b0ee88"/><rect x="39" y="12" width="1" height="1" fill="#74cc48"/><rect x="27" y="51" width="2" height="2" fill="#6ac444"/><rect x="3" y="29" width="3" height="3" fill="#9ae66c"/><rect x="16" y="15" width="1" height="1" fill="#b0ee88"/><rect x="4" y="34" width="1" height="1" fill="#6ac444"/><rect x="12" y="12" width="3" height="3" fill="#d8f4c4"/><rect x="16" y="24" width="2" height="2" fill="#b0ee88"/><rect x="32" y="26" width="2" height="2" fill="#9ae66c"/><rect x="34" y="48" width="2" height="2" fill="#b0ee88"/><rect x="41" y="43" width="3" height="3" fill="#6ac444"/><rect x="46" y="34" width="2" height="2" fill="#9ae66c"/><rect x="39" y="22" width="2" height="2" fill="#74cc48"/><rect x="12" y="9" width="2" height="2" fill="#74cc48"/><rect x="15" y="21" width="2" height="2" fill="#b0ee88"/><rect x="47" y="3" width="2" height="2" fill="#9ae66c"/><rect x="15" y="8" width="3" height="3" fill="#9ae66c"/><rect x="36" y="1" width="2" height="2" fill="#9ae66c"/><path d="M0 30 Q8 24 14 29 Q24 34 32 28 Q40 23 48 30 L48 33 L0 33 Z" fill="#4a5030"/><rect x="15" y="27" width="2" height="2" fill="#8a7050"/><rect x="10" y="27" width="2" height="2" fill="#303820"/><rect x="23" y="29" width="2" height="2" fill="#8a7050"/><rect x="9" y="28" width="2" height="2" fill="#e8e8d8"/><rect x="44" y="32" width="2" height="2" fill="#303820"/><rect x="26" y="31" width="2" height="2" fill="#8a7050"/><rect x="41" y="29" width="2" height="2" fill="#8a7050"/><rect x="44" y="28" width="2" height="2" fill="#303820"/><rect x="37" y="27" width="2" height="2" fill="#e8e8d8"/><rect x="19" y="27" width="2" height="2" fill="#e8e8d8"/><rect x="38" y="28" width="2" height="2" fill="#303820"/><rect x="38" y="31" width="2" height="2" fill="#e8e8d8"/><rect x="32" y="27" width="2" height="2" fill="#e8e8d8"/><rect x="42" y="31" width="2" height="2" fill="#8a7050"/><rect x="38" y="30" width="2" height="2" fill="#303820"/><rect x="42" y="28" width="2" height="2" fill="#8a7050"/><rect x="7" y="31" width="2" height="2" fill="#303820"/><rect x="6" y="30" width="2" height="2" fill="#303820"/><rect x="13" y="29" width="2" height="2" fill="#e8e8d8"/><rect x="27" y="27" width="2" height="2" fill="#e8e8d8"/><rect x="39" y="31" width="2" height="2" fill="#e8e8d8"/><rect x="4" y="28" width="2" height="2" fill="#303820"/><rect x="25" y="31" width="2" height="2" fill="#303820"/><rect x="22" y="32" width="2" height="2" fill="#303820"/><path d="M0 33 L12 33 Q16 40 12 38 L0 38 Z" fill="#f4f4ec"/><path d="M30 33 L44 33 L42 39 L30 38 Z" fill="#f4f4ec"/><path d="M4 44 Q16 36 26 41 Q36 46 48 40" stroke="#3a4028" stroke-width="0.8" fill="none"/><rect x="0" y="0" width="1" height="53" fill="#2a2a2a"/><rect x="0" y="52" width="48" height="1" fill="#2a3a20"/></svg>
<div class="a" style="left:893px;top:419px;width:6px;height:11px;border-left:3px solid #6a3a30"></div>
<div class="a" style="left:893px;top:443px;width:6px;height:12px;border-left:2px solid #d07070;border-top:1px solid #d07070"></div>
<div class="a" style="left:896px;top:491px;width:103px;height:3px;background:#3d7ec8;border-radius:2px"></div>
<div class="a" style="left:896px;top:494px;width:103px;height:2px;background:#e8f0fa"></div>
<div class="a" style="left:544px;top:616px;width:187px;height:96px;background:linear-gradient(160deg,#48ab6b,#4db070 60%,#55b577);border-radius:7px;box-shadow:0 2px 5px rgba(0,0,0,0.15)"></div>
<div class="a" style="left:824px;top:619px;width:134px;height:46px;background:#30a562;border-radius:9px;box-shadow:0 2px 4px rgba(0,0,0,0.18)"></div>
<div class="a" style="left:1205px;top:705px;width:129px;height:52px;background:rgba(0,0,0,0.3);border-radius:26px"></div>
<svg class="a" style="left:1250px;top:712px" width="70" height="38" viewBox="1250 712 70 38">
<g stroke="#d2d2d2" stroke-width="2.4" fill="none" stroke-linecap="butt">
<path d="M1260.5 718 L1255 731"/>
<path d="M1259 724.5 L1280.5 724.5"/>
<path d="M1258.5 733 L1279 733"/>
<path d="M1254 743 L1282 743"/>
<path d="M1267.8 717.5 L1267.8 743"/>
<path d="M1290 726.5 L1312 726.5"/>
<path d="M1290.5 726 L1290.5 735 Q1290 741 1286.5 744.5"/>
<path d="M1290.5 734.5 L1298 734.5 L1297.5 741.5 L1294.5 741"/>
<path d="M1300.5 717.5 Q1301 733 1308 740 Q1311 743.5 1312.5 744 L1313.5 737"/>
<path d="M1309.5 731 Q1304 740 1294 745"/>
<path d="M1304.5 718 L1307.5 721"/>
</g></svg>
<div class="a" style="left:40px;top:14.0px;font-size:10px;line-height:10px;color:#e6e6e6;font-weight:400;letter-spacing:-0.900px;-webkit-text-stroke:0.35px #e6e6e6;">SAMRSTENONON TWNWDE NIAGRUIES</div>
<div class="a" style="left:35px;top:59.0px;font-size:13px;line-height:13px;color:#eeeeee;font-weight:400;letter-spacing:-0.900px;transform:scaleX(0.947);transform-origin:0 0;">BW</div>
<div class="a" style="left:1187px;top:13.8px;font-size:10px;line-height:10px;color:#e0e0e0;font-weight:700;letter-spacing:-0.697px;">lOltu</div>
<div class="a" style="left:1289px;top:14.3px;font-size:9px;line-height:9px;color:#e0e0e0;font-weight:700;letter-spacing:-0.900px;transform:scaleX(0.921);transform-origin:0 0;">ndüun</div>
<div class="a" style="left:1063px;top:60.8px;font-size:13px;line-height:13px;color:#eeeeee;font-weight:400;letter-spacing:-0.071px;">SIE DWG GHUCRUEH</div>
<div class="a" style="left:1289px;top:60.5px;font-size:10px;line-height:10px;color:#e6eeff;font-weight:700;letter-spacing:-0.078px;">Onel</div>
<div class="a" style="left:67px;top:115.0px;font-size:13px;line-height:13px;color:#ececec;font-weight:400;letter-spacing:-0.018px;">Setter m</div>
<div class="a" style="left:205px;top:122.5px;font-size:11px;line-height:11px;color:#303030;font-weight:400;letter-spacing:1.200px;transform:scaleX(1.094);transform-origin:0 0;">Luiiiv</div>
<div class="a" style="left:351px;top:114.5px;font-size:13px;line-height:13px;color:#ececec;font-weight:400;letter-spacing:0.108px;">Domol</div>
<div class="a" style="left:67px;top:165.5px;font-size:13px;line-height:13px;color:#e6e6e6;font-weight:400;letter-spacing:0.153px;">@aoodn Sucseiece.</div>
<div class="a" style="left:364px;top:165.0px;font-size:13px;line-height:13px;color:#e6e6e6;font-weight:400;letter-spacing:-0.900px;">Repn</div>
<div class="a" style="left:69px;top:216.0px;font-size:13px;line-height:13px;color:#e2e2e2;font-weight:400;letter-spacing:0.389px;">Astaracurv/o.&nbsp;&nbsp; Mlan</div>
<div class="a" style="left:365px;top:216.0px;font-size:13px;line-height:13px;color:#e2e2e2;font-weight:400;letter-spacing:-0.900px;transform:scaleX(0.965);transform-origin:0 0;">Leacs</div>
<div class="a" style="left:65px;top:265.0px;font-size:14px;line-height:14px;color:#dddddd;font-weight:400;letter-spacing:-0.322px;">Hwwww Voc &nbsp;C5D Flentline</div>
<div class="a" style="left:364px;top:264.0px;font-size:13px;line-height:13px;color:#e2e2e2;font-weight:400;letter-spacing:-0.900px;transform:scaleX(0.936);transform-origin:0 0;">Meo</div>
<div class="a" style="left:67px;top:342.0px;font-size:10px;line-height:10px;color:#bdbdbd;font-weight:400;letter-spacing:0.135px;">Senaouel Steale Sucs</div>
<div class="a" style="left:364px;top:341.5px;font-size:11px;line-height:11px;color:#bdbdbd;font-weight:400;letter-spacing:0.553px;">Lecomms</div>
<div class="a" style="left:78px;top:412.2px;font-size:13.5px;line-height:13.5px;color:#e6e6e6;font-weight:400;letter-spacing:0.097px;">Sxes Aogneria Athol Katcnih.</div>
<div class="a" style="left:364px;top:410.5px;font-size:13px;line-height:13px;color:#e6e6e6;font-weight:400;letter-spacing:-0.900px;transform:scaleX(0.838);transform-origin:0 0;">Weep</div>
<div class="a" style="left:81px;top:463.5px;font-size:13px;line-height:13px;color:#adadad;font-weight:400;letter-spacing:0.286px;">S s sOng Reeocr</div>
<div class="a" style="left:364px;top:463.5px;font-size:13px;line-height:13px;color:#8c8c8c;font-weight:400;letter-spacing:-0.900px;transform:scaleX(0.916);transform-origin:0 0;">Gopy</div>
<div class="a" style="left:65px;top:521.5px;font-size:13px;line-height:13px;color:#e6e6e6;font-weight:400;letter-spacing:-0.558px;">Eirt OHIL</div>
<div class="a" style="left:117px;top:525.0px;font-size:8px;line-height:8px;color:#aaaaaa;font-weight:400;letter-spacing:0.474px;">&mdash;&mdash;&mdash;lnfanoos</div>
<div class="a" style="left:364px;top:521.5px;font-size:13px;line-height:13px;color:#9a9a9a;font-weight:400;letter-spacing:-0.423px;">Teaby</div>
<div class="a" style="left:57px;top:583.0px;font-size:10px;line-height:10px;color:#484848;font-weight:400;letter-spacing:1.200px;-webkit-text-stroke:0.2px #484848;transform:scaleX(1.199);transform-origin:0 0;">v</div>
<div class="a" style="left:69px;top:580.2px;font-size:14.5px;line-height:14.5px;color:#e6e6e6;font-weight:400;letter-spacing:-0.059px;">&ndash; Alaeaonteqnana Counroron</div>
<div class="a" style="left:364px;top:581.5px;font-size:13px;line-height:13px;color:#7c7c7c;font-weight:400;letter-spacing:-0.881px;">Teure</div>
<div class="a" style="left:478px;top:107.5px;font-size:11px;line-height:11px;color:#3c3c3c;font-weight:400;letter-spacing:0.519px;-webkit-text-stroke:0.25px #3c3c3c;">wlcs ,&nbsp; Uelieos. Deuilbik</div>
<div class="a" style="left:474px;top:138.5px;font-size:19px;line-height:19px;color:#262626;font-weight:400;letter-spacing:0.022px;-webkit-text-stroke:0.7px #262626;">Twe Wotorlan fnaw t&ndash; merthnicakel aacherlina sestinaes</div>
<div class="a" style="left:480px;top:168.0px;font-size:10px;line-height:10px;color:#4a4a4a;font-weight:400;letter-spacing:0.157px;-webkit-text-stroke:0.2px #4a4a4a;">lrvgg oontant Ilnmqhlilet&nbsp; olfna lalroppreats la tilé lnotlnuclv ocx ofo tlle lir llymanhqhol soellleolet os slocmtlo</div>
<div class="a" style="left:480px;top:182.0px;font-size:10px;line-height:10px;color:#4a4a4a;font-weight:400;letter-spacing:-0.149px;-webkit-text-stroke:0.2px #4a4a4a;">eowenol dor Inor grsta cleal onol ournin lnle Ina tne lnatitse lng sasldy ole tyna Vootiomal as Ifost as oooilt ocf olt ooe oltnrs</div>
<div class="a" style="left:480px;top:195.0px;font-size:10px;line-height:10px;color:#4a4a4a;font-weight:400;letter-spacing:0.136px;-webkit-text-stroke:0.2px #4a4a4a;">Awn lovlqnaachen Soo Invoerta Sdronnoiloslsr andtegon..</div>
<div class="a" style="left:480px;top:216.0px;font-size:10px;line-height:10px;color:#4a4a4a;font-weight:400;letter-spacing:-0.165px;-webkit-text-stroke:0.2px #4a4a4a;">Ulotolitilet amoctoo flnno lp loo olt n ooc flthen otl aloooox goolltlegr ory Tolsloat edsingl urro toans lnulrs t cuts st 3n on oonuire</div>
<div class="a" style="left:480px;top:229.0px;font-size:10px;line-height:10px;color:#4a4a4a;font-weight:400;letter-spacing:0.050px;-webkit-text-stroke:0.2px #4a4a4a;">unc lntpon. cogc ootdtefmack nvvlaloinss fetoeltowsp loolmoll nr elb</div>
<div class="a" style="left:480px;top:250.0px;font-size:10px;line-height:10px;color:#404040;font-weight:400;letter-spacing:-0.156px;-webkit-text-stroke:0.2px #404040;">rafkelkel</div>
<div class="a" style="left:521px;top:250.0px;font-size:10px;line-height:10px;color:#2d6aac;font-weight:700;letter-spacing:0.013px;">we voo onliro Ihergrdtos</div>
<div class="a" style="left:512px;top:301.2px;font-size:19.5px;line-height:19.5px;color:#262626;font-weight:700;letter-spacing:-0.482px;">Accunend: Aul Viewers</div>
<div class="a" style="left:520px;top:337.5px;font-size:10px;line-height:10px;color:#484848;font-weight:400;letter-spacing:-0.358px;-webkit-text-stroke:0.2px #484848;">Lcasunllf l&nbsp; Dalalalcane emcd otar V&nbsp; Mblnlnoo ganbedoloet&nbsp; Jos Solero</div>
<div class="a" style="left:519px;top:351.0px;font-size:10px;line-height:10px;color:#484848;font-weight:400;letter-spacing:-0.264px;-webkit-text-stroke:0.2px #484848;">Onlooaralenossiea Drotoeooolsnvvlvan lmeofrotondd aoo.a tnuc of oeslo.</div>
<div class="a" style="left:1037px;top:321.8px;font-size:10.5px;line-height:10.5px;color:#363636;font-weight:400;letter-spacing:-0.515px;-webkit-text-stroke:0.35px #363636;">Stuvr&nbsp; Tory&nbsp; Intenoleoleno</div>
<div class="a" style="left:1037px;top:347.8px;font-size:10.5px;line-height:10.5px;color:#363636;font-weight:400;letter-spacing:-0.149px;-webkit-text-stroke:0.35px #363636;">bönhVuisleilems</div>
<div class="a" style="left:897px;top:474.5px;font-size:9px;line-height:9px;color:#585858;font-weight:400;letter-spacing:-0.202px;-webkit-text-stroke:0.2px #585858;">Rl ls alt ebilno</div>
<div class="a" style="left:969px;top:415.5px;font-size:10px;line-height:10px;color:#363636;font-weight:400;letter-spacing:-0.331px;-webkit-text-stroke:0.15px #363636;">Nanura l'tioonm eh</div>
<div class="a" style="left:969px;top:428.0px;font-size:10px;line-height:10px;color:#363636;font-weight:400;letter-spacing:-0.005px;-webkit-text-stroke:0.15px #363636;">Onenterlogsn</div>
<div class="a" style="left:963px;top:449.0px;font-size:10px;line-height:10px;color:#363636;font-weight:400;letter-spacing:0.106px;-webkit-text-stroke:0.15px #363636;">&middot; Wosor llolono</div>
<div class="a" style="left:968px;top:474.5px;font-size:9px;line-height:9px;color:#4a4a4a;font-weight:400;letter-spacing:-0.115px;-webkit-text-stroke:0.2px #4a4a4a;">Nfsuuleavn</div>
<div class="a" style="left:514px;top:533.5px;font-size:18px;line-height:18px;color:#222222;font-weight:700;letter-spacing:-0.185px;">Boetoiro. &part;4 axaig Eecurwery</div>
<div class="a" style="left:518px;top:569.0px;font-size:10px;line-height:10px;color:#585858;font-weight:400;letter-spacing:-0.185px;-webkit-text-stroke:0.1px #585858;">'Pnar alooon toAf Ilno lns lulolotogjV olt ltr aoosgg dMiE 81 oNA&nbsp; ,tlaooor ylaoooro n&nbsp; 8oOtl 3 oxno&nbsp; ovvuhond loolnos</div>
<div class="a" style="left:518px;top:582.0px;font-size:10px;line-height:10px;color:#585858;font-weight:400;letter-spacing:-0.110px;-webkit-text-stroke:0.1px #585858;">uuold aonnnunost Ind cg osro ooroon lhutt</div>
<div class="a" style="left:595px;top:637.5px;font-size:13px;line-height:13px;color:#eefbf1;font-weight:400;letter-spacing:0.686px;-webkit-text-stroke:0.5px #eefbf1;">Stanrte Dicap</div>
<div class="a" style="left:597px;top:663.5px;font-size:9px;line-height:9px;color:#b9e5c7;font-weight:400;letter-spacing:-0.003px;">Sl noo oyylsl Bouv -</div>
<div class="a" style="left:596px;top:678.5px;font-size:9px;line-height:9px;color:#b9e5c7;font-weight:400;letter-spacing:-0.122px;">Dlslooo oio Ilxool Bor</div>
<div class="a" style="left:597px;top:690.5px;font-size:9px;line-height:9px;color:#b0dfbf;font-weight:400;letter-spacing:-0.137px;">Dlnlaooloa Boooo</div>
<div class="a" style="left:595px;top:704.0px;font-size:8px;line-height:8px;color:#80c898;font-weight:400;letter-spacing:-0.593px;">l l l ooo oooolo ooo Boo</div>
<div class="a" style="left:867px;top:636.5px;font-size:12px;line-height:12px;color:#e6f5ea;font-weight:400;letter-spacing:0.050px;">Ceenola</div>
<div class="a" style="left:1224px;top:715.5px;font-size:31px;line-height:31px;color:#d2d2d2;font-weight:400;letter-spacing:-0.900px;transform:scaleX(0.915);transform-origin:0 0;">AI</div>
</body></html>
